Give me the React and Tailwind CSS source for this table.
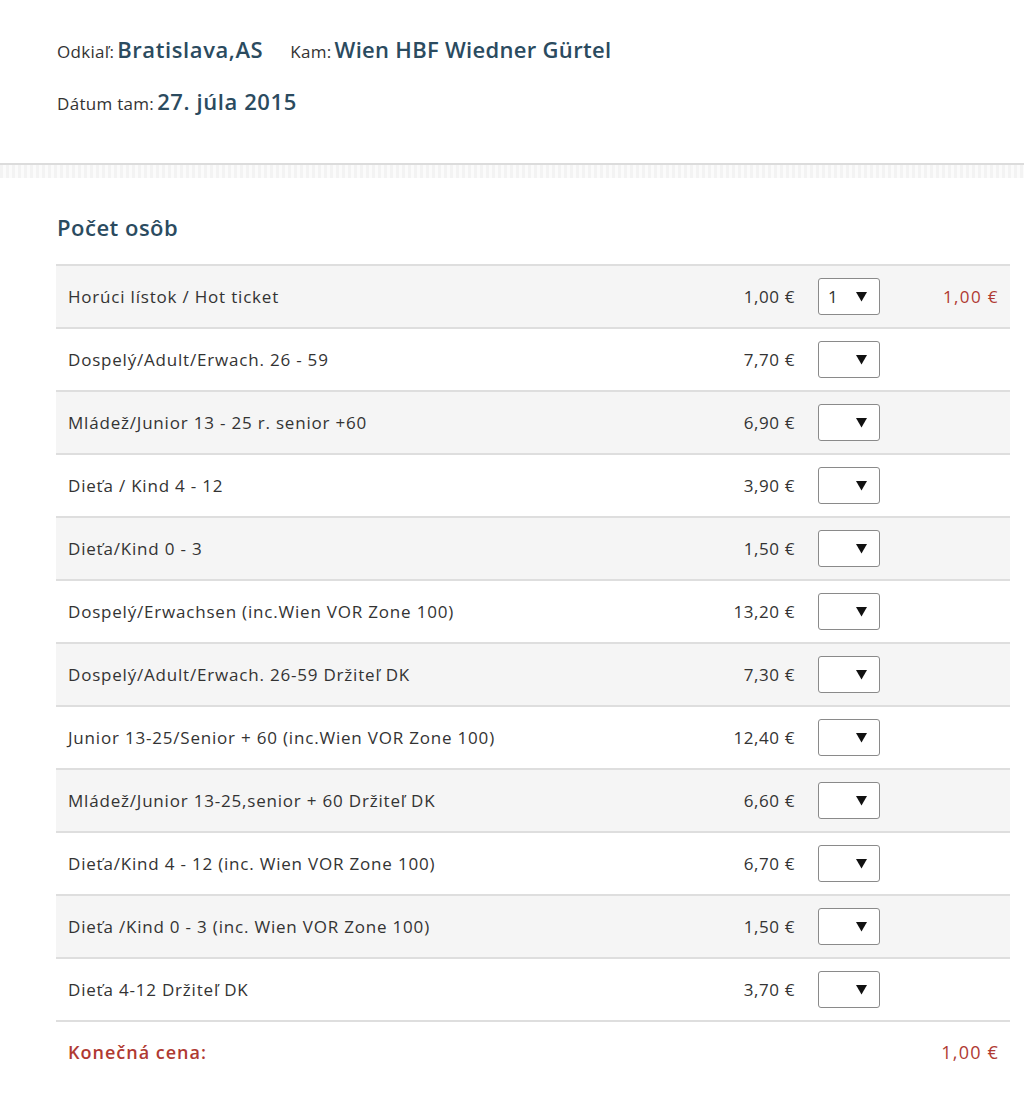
import React from "react";

const rows = [
  ["Horúci lístok / Hot ticket", "1,00 €", "1", "1,00 €"],
  ["Dospelý/Adult/Erwach. 26 - 59", "7,70 €", "", ""],
  ["Mládež/Junior 13 - 25 r. senior +60", "6,90 €", "", ""],
  ["Dieťa / Kind 4 - 12", "3,90 €", "", ""],
  ["Dieťa/Kind 0 - 3", "1,50 €", "", ""],
  ["Dospelý/Erwachsen (inc.Wien VOR Zone 100)", "13,20 €", "", ""],
  ["Dospelý/Adult/Erwach. 26-59 Držiteľ DK", "7,30 €", "", ""],
  ["Junior 13-25/Senior + 60 (inc.Wien VOR Zone 100)", "12,40 €", "", ""],
  ["Mládež/Junior 13-25,senior + 60 Držiteľ DK", "6,60 €", "", ""],
  ["Dieťa/Kind 4 - 12 (inc. Wien VOR Zone 100)", "6,70 €", "", ""],
  ["Dieťa /Kind 0 - 3 (inc. Wien VOR Zone 100)", "1,50 €", "", ""],
  ["Dieťa 4-12 Držiteľ DK", "3,70 €", "", ""],
];

function Select({ value }) {
  return (
    <div className="ml-[23px] w-[62px] h-[37px] border border-[#8a8a8a] rounded-[3px] bg-white flex items-center justify-between pl-[9px] pr-[12px]">
      <span className="text-[17px] text-[#333]">{value}</span>
      <svg width="11" height="11" viewBox="0 0 11 11">
        <polygon points="0,1 11,1 5.5,10.5" fill="#111" />
      </svg>
    </div>
  );
}

export default function App() {
  return (
    <div className="w-[1024px] h-[1095px] bg-white text-[#333]" style={{ fontFamily: "'Open Sans', 'Liberation Sans', sans-serif" }}>
      <div className="pl-[57px] pt-[33px] h-[163px]">
        <div className="flex items-baseline text-[#2b4b5f]">
          <span className="text-[17px] text-[#333] tracking-[0.3px]">Odkiaľ:</span>
          <span className="ml-[3px] text-[22px] font-semibold tracking-[0.6px]">Bratislava,AS</span>
          <span className="ml-[27px] text-[17px] text-[#333] tracking-[0.3px]">Kam:</span>
          <span className="ml-[3px] text-[22px] font-semibold tracking-[0.3px]">Wien HBF Wiedner Gürtel</span>
        </div>
        <div className="flex items-baseline text-[#2b4b5f] mt-[19px]">
          <span className="text-[17px] text-[#333] tracking-[0.3px]">Dátum tam:</span>
          <span className="ml-[3px] text-[22px] font-semibold tracking-[0.6px]">27. júla 2015</span>
        </div>
      </div>
      <div className="h-[15px] border-t-2 border-[#dcdcdc] bg-[repeating-linear-gradient(90deg,#f3f3f3_0px,#f3f3f3_3px,#fbfbfb_3px,#fbfbfb_6px)]" />
      <div className="pl-[56px] pr-[14px]">
        <div className="pt-[31px] pb-[19px] pl-[1px] text-[22px] font-semibold text-[#2b4b5f] leading-[36px] tracking-[0.5px]">
          Počet osôb
        </div>
        <div className="border-t-2 border-[#dedede]">
          {rows.map((r, i) => (
            <div
              key={i}
              className={`flex items-center h-[63px] border-b-2 border-[#dedede] pl-[12px] pr-[11px] text-[17px] ${i % 2 === 0 ? "bg-[#f5f5f5]" : "bg-white"}`}
            >
              <span className="flex-1 tracking-[0.8px]">{r[0]}</span>
              <span className="w-[100px] text-right tracking-[0.6px]">{r[1]}</span>
              <Select value={r[2]} />
              <span className="w-[119px] text-right text-[#b03a32] tracking-[1.4px]">{r[3]}</span>
            </div>
          ))}
        </div>
        <div className="flex items-center h-[60px] pl-[12px] pr-[11px] text-[18px] text-[#b03a32]">
          <span className="flex-1 font-semibold tracking-[1px]">Konečná cena:</span>
          <span className="tracking-[1.2px]">1,00 €</span>
        </div>
      </div>
    </div>
  );
}
